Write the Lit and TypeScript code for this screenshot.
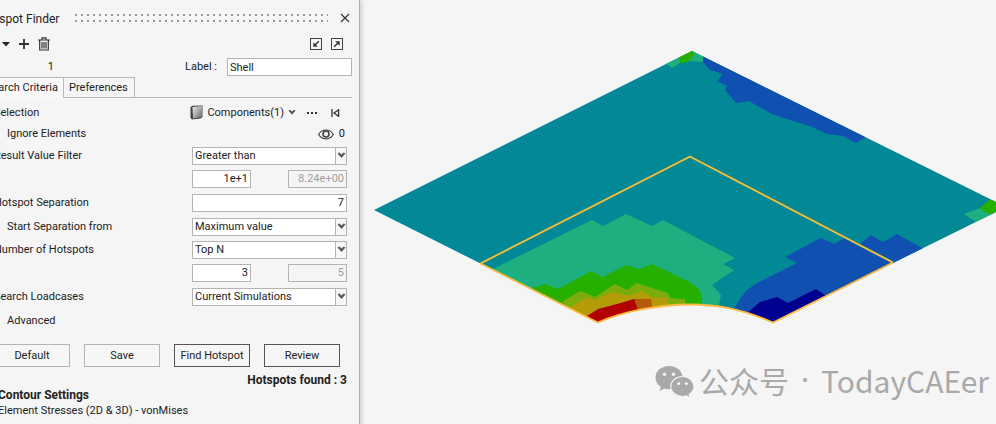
import { LitElement, html, css, svg } from "lit";
import { customElement, property } from "lit/decorators.js";

const chevron = svg`<path d="M1 1.5 L4.5 5.5 L8 1.5 L6.6 1 L4.5 2.8 L2.4 1 Z" fill="#555" stroke="#555" stroke-width=".8"/>`;

@customElement("drop-down")
class DropDown extends LitElement {
  static styles = css`
    :host { display: grid; width: 155px; height: 18px; }
    * { box-sizing: border-box; }
    .field { grid-area: 1 / 1; appearance: none; width: 100%; height: 18px; margin: 0; padding: 0 14px 0 2px;
      border: 1px solid #b4b4b4; border-radius: 0; background: #fff; color: #222; font: inherit; }
    .arrow { grid-area: 1 / 1; justify-self: end; width: 12px; height: 18px; display: flex; align-items: center;
      justify-content: center; border: 1px solid #b4b4b4; background: #f6f6f6; pointer-events: none; }
  `;
  @property() value = "";
  @property() name = "";
  render() {
    return html`
      <select class="field" aria-label=${this.name}><option>${this.value}</option></select>
      <span class="arrow"><svg width="9" height="7" viewBox="0 0 9 7">${chevron}</svg></span>
    `;
  }
}

@customElement("hotspot-panel")
class HotspotPanel extends LitElement {
  static styles = css`
    :host { display: block; box-sizing: border-box; flex: none; width: 380px; margin-left: -20px;
      border-right: 1px solid #b0b0b0; box-shadow: 2px 0 4px #d0d0d0; background: #f5f5f5; }
    * { box-sizing: border-box; }
    button, input { font: inherit; color: inherit; margin: 0; border-radius: 0; }
    svg { display: block; }
    .icon { border: 0; background: none; padding: 0; display: block; }
    .title { display: flex; align-items: center; justify-content: flex-end; height: 36px; padding-right: 9px; }
    .name { font-size: 12px; font-weight: 400; margin: 2px 16px 0 0; white-space: nowrap; }
    .grip { margin-right: 12px; }
    .tools { display: flex; align-items: center; height: 16px; padding: 0 16px 0 22px; gap: 9px; }
    .tools .push { margin-left: auto; }
    .head { display: flex; align-items: center; height: 18px; margin-top: 6px; padding-right: 7px; }
    .count { width: 74px; text-align: right; }
    .head label { margin-left: auto; margin-right: 10px; }
    .box { height: 18px; border: 1px solid #b4b4b4; background: #fff; padding: 0 2px; }
    .caption { width: 125px; }
    .tabs { display: flex; height: 21px; margin: 1px 7px 0 0; border-bottom: 1px solid #b8b8b8; }
    .tab { height: 20px; border: 1px solid #b8b8b8; border-left: 0; border-bottom: 0; background: #f5f5f5; padding: 0 6px 0 5px; }
    .chosen { width: 84px; height: 21px; background: #f8f8f8; padding: 0 6px; text-align: right; white-space: nowrap; }
    .rows { padding: 3px 12px 0 14px; }
    .row { display: flex; align-items: center; height: 23px; }
    .short { height: 20px; }
    .lead { margin-top: 1px; }
    .text { margin-right: auto; }
    .sub { padding-left: 13px; }
    .num { text-align: right; width: 59px; }
    .wide { width: 155px; }
    .gap { margin-right: 37px; }
    .off:disabled { background: #f5f5f5; color: #a0a0a0; }
    .pick { display: flex; align-items: center; gap: 4px; padding: 0; border: 0; background: none; margin-right: 11px; }
    .more { margin-right: 13px; }
    .last { margin-right: 7px; }
    .eye { margin-right: 5px; }
    .end { margin-right: 2px; }
    .buttons { display: flex; gap: 14px; padding: 12px 0 0 14px; }
    .push-button { width: 76px; height: 23px; border: 1px solid #b4b4b4; background: #f6f6f6; padding: 0; }
    .strong { border-color: #555; }
    .found { font-size: 12px; font-weight: 700; text-align: right; margin: 0; padding: 5px 12px 0 0; line-height: 16px; }
    .foot { padding: 0 0 8px 18px; }
    .foot h2 { font-size: 12px; font-weight: 700; line-height: 15px; margin: 0; }
    .foot p { margin: 0; line-height: 15px; }
  `;
  render() {
    return html`
      <header class="title">
        <h1 class="name">Hotspot Finder</h1>
        <svg class="grip" width="254" height="8">
          <defs><pattern id="dots" width="6" height="6" patternUnits="userSpaceOnUse"><rect width="2" height="2" fill="#999"/></pattern></defs>
          <rect width="254" height="8" fill="url(#dots)"/>
        </svg>
        <button class="icon" aria-label="Close"><svg width="10" height="10" viewBox="0 0 10 10"><path d="M1 1 9 9M9 1 1 9" stroke="#333" stroke-width="1.2"/></svg></button>
      </header>
      <div class="tools">
        <button class="icon" aria-label="Menu"><svg width="8" height="5" viewBox="0 0 8 5"><path d="M0 0H8L4 4.5Z" fill="#222"/></svg></button>
        <button class="icon" aria-label="Add"><svg width="10" height="10" viewBox="0 0 10 10"><path d="M5 0V10M0 5H10" stroke="#333" stroke-width="1.8"/></svg></button>
        <button class="icon" aria-label="Delete"><svg width="12" height="14" viewBox="0 0 12 14"><path d="M0 3H12M4 2.5V.8H8V2.5M1.7 3V13H10.3V3M4 5V11.4M6 5V11.4M8 5V11.4" fill="none" stroke="#333" stroke-width="1.2"/></svg></button>
        <button class="icon push" aria-label="Import"><svg width="12" height="12" viewBox="0 0 12 12"><rect x=".5" y=".5" width="11" height="11" fill="none" stroke="#444"/><path d="M8.8 3.2 5 7" stroke="#333" stroke-width="1.5"/><path d="M3.3 4.2V8.7H7.8Z" fill="#333"/></svg></button>
        <button class="icon" aria-label="Export"><svg width="12" height="12" viewBox="0 0 12 12"><rect x=".5" y=".5" width="11" height="11" fill="none" stroke="#444"/><path d="M3.2 8.8 7 5" stroke="#333" stroke-width="1.5"/><path d="M4.2 3.3H8.7V7.8Z" fill="#333"/></svg></button>
      </div>
      <div class="head">
        <span class="count">1</span>
        <label for="caption">Label :</label>
        <input id="caption" class="box caption" value="Shell">
      </div>
      <div class="tabs" role="tablist">
        <button class="tab chosen" role="tab" aria-selected="true">Search Criteria</button>
        <button class="tab" role="tab" aria-selected="false">Preferences</button>
      </div>
      <div class="rows">
        <div class="row">
          <span class="text">Selection</span>
          <button class="pick">
            <svg width="13" height="15" viewBox="0 0 13 15"><defs><linearGradient id="sheet" x2="1" y2="1"><stop stop-color="#eee"/><stop offset="1" stop-color="#666"/></linearGradient></defs><path d="M.5 2 2.5.8 12.5.5V12L10.5 13.5 2 14.5.5 13Z" fill="#444"/><path d="M2.5 2 12 1V12L3 13.5Z" fill="url(#sheet)"/></svg>
            Components(1)
            <svg width="8" height="7" viewBox="0 0 9 7">${chevron}</svg>
          </button>
          <button class="icon more" aria-label="More"><svg width="11" height="2"><path d="M0 0h2v2H0ZM4 0h2v2H4ZM8 0h2v2H8Z" fill="#333"/></svg></button>
          <button class="icon last" aria-label="Reset"><svg width="9" height="8" viewBox="0 0 9 8"><path d="M1 0V8M7.6 .7 3 4 7.6 7.3Z" fill="none" stroke="#333" stroke-width="1.3"/></svg></button>
        </div>
        <div class="row short">
          <span class="text sub">Ignore Elements</span>
          <svg class="eye" width="16" height="11" viewBox="0 0 16 11"><path d="M.7 5.5C4-.5 12-.5 15.3 5.5 12 11.3 4 11.3.7 5.5Z" fill="none" stroke="#444" stroke-width="1.2"/><circle cx="8" cy="5" r="3" fill="none" stroke="#444" stroke-width="1.6"/></svg>
          <span class="end">0</span>
        </div>
        <div class="row">
          <span class="text">Result Value Filter</span><drop-down name="Result Value Filter" value="Greater than"></drop-down>
        </div>
        <div class="row">
          <span class="text"></span>
          <input class="box num gap" aria-label="Threshold" value="1e+1">
          <input class="box num off" aria-label="Current threshold" value="8.24e+00" disabled>
        </div>
        <div class="row lead">
          <label class="text" for="separation">Hotspot Separation</label><input id="separation" class="box num wide" value="7">
        </div>
        <div class="row lead">
          <span class="text sub">Start Separation from</span><drop-down name="Start Separation from" value="Maximum value"></drop-down>
        </div>
        <div class="row">
          <span class="text">Number of Hotspots</span><drop-down name="Number of Hotspots" value="Top N"></drop-down>
        </div>
        <div class="row">
          <span class="text"></span>
          <input class="box num gap" aria-label="Count" value="3">
          <input class="box num off" aria-label="Current count" value="5" disabled>
        </div>
        <div class="row lead">
          <span class="text">Search Loadcases</span><drop-down name="Search Loadcases" value="Current Simulations"></drop-down>
        </div>
        <div class="row lead"><span class="text sub">Advanced</span></div>
      </div>
      <div class="buttons">
        <button class="push-button">Default</button>
        <button class="push-button">Save</button>
        <button class="push-button strong">Find Hotspot</button>
        <button class="push-button strong">Review</button>
      </div>
      <p class="found">Hotspots found : 3</p>
      <section class="foot">
        <h2>Contour Settings</h2>
        <p>Element Stresses (2D &amp; 3D) - vonMises</p>
      </section>
    `;
  }
}

const regions: [string, string][] = [
  ["#1eaf80", "493,269 592,220 603,226 626,214 652,226 663,220 735,258 723,264 734,270 712,285 721,295 718,310 590,330"],
  ["#25b000", "532,288 545,284 558,289 591,271 603,277 626,265 639,269 652,264 690,282 698,288 702,296 702,310 590,330"],
  ["#7cac0c", "562,302 580,291 595,297 615,284 627,290 637,283 652,288 668,293 670,298 685,299 685,310 590,330"],
  ["#b49c08", "570,307 588,297 595,300 612,292 628,296 642,291 651,297 668,298 668,310 590,330"],
  ["#b45a08", "634,299 651,299 653,310 630,310"],
  ["#b00000", "587,316 598,309 617,304 634,299 638,310 598,330"],
  ["#0f50b0", "733,310 740,299 747,290 757,283 797,263 785,257 821,238 834,244 845,238 860,244 871,235 883,242 897,234 924,249 893,270 773,330"],
  ["#000090", "747,313 760,302 777,297 788,303 816,289 828,297 773,330"],
  ["#1eaf80", "964,214 980,208 992,214 978,223"],
  ["#25b000", "980,208 989,200 1000,200 1000,216 986,213"],
  ["#0f50b0", "703,54 703,62 710,70 723,74 717,81 727,86 725,90 736,103 749,101 772,114 800,123 812,127 827,134 843,136 856,143 866,137"],
  ["#1eaf80", "665,63 672,68 680,63 690,61 703,62 703,56 692,50"],
  ["#25b000", "679,56 680,63 688,62 693,56 693,50"],
];

@customElement("result-view")
class ResultView extends LitElement {
  static styles = css`
    :host { display: block; flex: 1; min-width: 0; position: relative; }
    .plot { display: block; width: 100%; height: auto; }
    .mark { position: absolute; right: 7px; bottom: 26px; display: flex; align-items: center; gap: 12px; color: #a9a9a9;
      font: 30px/40px "Noto Sans CJK SC", sans-serif; white-space: nowrap; }
    .logo { display: block; margin: 3px -8px 0 0; }
    .dot { font-family: "Noto Sans", sans-serif; }
  `;
  render() {
    return html`
      <svg class="plot" viewBox="360 0 636 424" role="img" aria-label="Stress contour plot">
        <defs><clipPath id="plate"><path d="M374 210 692 51 1010 209 1000 210 893 263 773 322.5C740 308 716 304.5 690 304.5 660 304.5 624 311 598 322.5Z"/></clipPath></defs>
        <g clip-path="url(#plate)">
          <rect x="360" y="40" width="640" height="300" fill="#028995"/>
          ${regions.map(([fill, points]) => svg`<polygon fill=${fill} points=${points}/>`)}
        </g>
        <path d="M480.5 263.5 690 156.5 893 262.5" fill="none" stroke="#6f8a4a" stroke-width="2.4"/>
        <path d="M480.5 263.5 690 156.5 893 262.5" fill="none" stroke="#eec64e" stroke-width="1.5"/>
        <path d="M893 262.5 773 322.5C740 308 716 304.5 690 304.5 660 304.5 624 311 598 322.5L480.5 263.5" fill="none" stroke="#fdb840" stroke-width="1.8"/>
      </svg>
      <div class="mark">
        <svg class="logo" width="40" height="34" viewBox="0 0 40 34"><g fill="#a9a9a9">
          <path d="M14 1C6.3 1 .5 6 .5 12.5 .5 16.5 2.5 19.5 5.8 21.8L4.5 26 9.3 23.6C11 24.1 12.5 24.3 14 24.3 21.7 24.3 27.5 19 27.5 12.5S21.7 1 14 1Z"/>
          <path d="M27.5 11.5C21 11.5 15.8 16 15.8 21.5S21 31.5 27.5 31.5C29 31.5 30.3 31.3 31.5 30.9L35.3 33 34.3 29.4C37.2 27.5 39 24.7 39 21.5 39 16 34 11.5 27.5 11.5Z" stroke="#f5f5f5" stroke-width="1.2"/></g>
          <g fill="#f5f5f5"><circle cx="9.5" cy="9.3" r="1.7"/><circle cx="18.5" cy="9.3" r="1.7"/><circle cx="23.7" cy="18.5" r="1.5"/><circle cx="31.3" cy="18.5" r="1.5"/></g>
        </svg>
        <span>公众号</span><span class="dot">·</span><span>TodayCAEer</span>
      </div>
    `;
  }
}

@customElement("app-root")
class AppRoot extends LitElement {
  static styles = css`
    :host { display: flex; align-items: stretch; overflow: hidden; background: #f5f5f5; color: #222;
      font: 11px/16px Roboto, "Liberation Sans", sans-serif; min-height: 100vh; }
  `;
  render() {
    return html`<hotspot-panel></hotspot-panel><result-view></result-view>`;
  }
}
